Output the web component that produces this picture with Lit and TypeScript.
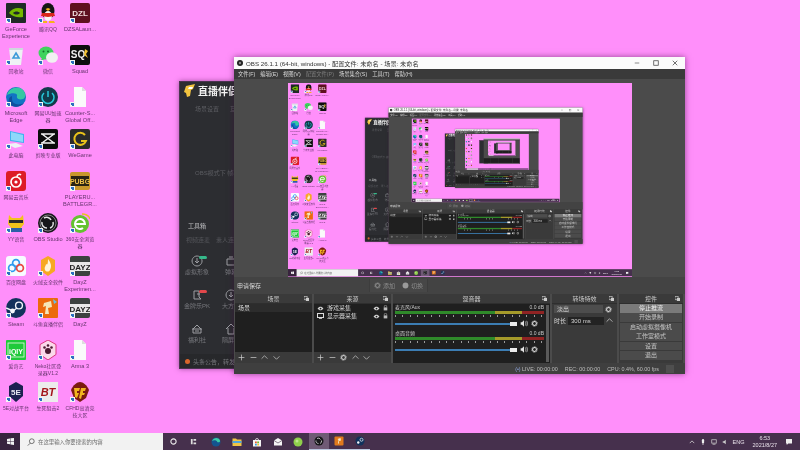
import { LitElement, html, css, svg, TemplateResult } from "lit";
import { customElement, property } from "lit/decorators.js";

const MIRROR_SCALE = 0.43;
const MAX_DEPTH = 4;
// below this nesting level text would be under a pixel, so windows are drawn as plain blocks
const TEXT_DEPTH = 3;

// all desktop icons share a 20x20 box
const ic = (body: unknown) => html`<svg class="ico" viewBox="0 0 20 20">${body}</svg>`;

const doc = svg`<path d="M4 0h8l4 4v16H4z" fill="#fafafa"/><path d="M12 0l4 4h-4z" fill="#ddd"/>`;
const dayz = svg`<rect width="20" height="20" rx="2" fill="#3c4240"/><rect y="6" width="20" height="9" fill="#e8e8e8"/><text x="10" y="13.5" font-size="8" font-weight="700" text-anchor="middle" fill="#222" font-family="Liberation Sans">DAYZ</text>`;

const ICONS: Record<string, TemplateResult> = {
  geforce: ic(svg`<rect width="20" height="20" rx="1" fill="#1f2a26"/><path d="M3 10c3-5 9-6 14-4v8c-5 1-10 0-14-4z" fill="#76b900"/><path d="M7 10c2-2 5-2 7 0-2 2-5 2-7 0z" fill="#1f2a26"/>`),
  qq: ic(svg`<ellipse cx="10" cy="8" rx="6.500" ry="8" fill="#151515"/><ellipse cx="10" cy="13" rx="4" ry="5" fill="#f5f5f5"/><path d="M4 10h12l1 3-7 1-7-1z" fill="#d8261c"/><path d="M7.500 6l2.500-1 2.500 1-2.500 2z" fill="#f5b21a"/><path d="M4 18h5v2H3zM11 18h5l1 2h-6z" fill="#f5b21a"/>`),
  dzsa: ic(svg`<rect width="20" height="20" rx="2" fill="#5e1020"/><text x="10" y="13" font-size="8" font-weight="700" text-anchor="middle" fill="#f0dcdc" font-family="Liberation Sans">DZL</text>`),
  bin: ic(svg`<path d="M3 3h14l-2 17H5z" fill="#eef2f5"/><path d="M3 3h14v2H3z" fill="#cfd8de"/><path d="M10 8l3 5H7z" fill="none" stroke="#3d9ad9" stroke-width="1.600"/>`),
  wechat: ic(svg`<ellipse cx="8" cy="8" rx="7.500" ry="6.500" fill="#3fd35d"/><path d="M4 12l-1 4 4-2z" fill="#3fd35d"/><ellipse cx="14" cy="12.500" rx="6" ry="5.200" fill="#f1f1f1"/><circle cx="5.500" cy="6.500" r="1" fill="#16702b"/><circle cx="10" cy="6.500" r="1" fill="#16702b"/>`),
  squad: ic(svg`<rect width="20" height="20" rx="2" fill="#0d0d0d"/><text x="8" y="13" font-size="10" font-weight="700" text-anchor="middle" fill="#eee" font-family="Liberation Sans">SQ</text><path d="M15 4l3 2-2 3 2 4-4-3z" fill="#f1c232"/>`),
  edge: ic(svg`<circle cx="10" cy="10" r="10" fill="#1273c4"/><path d="M1 8C3 1 12-2 17 3c3 3 3 8 0 9-3 1-7 0-6-3 1-3-5-4-10-1z" fill="#35c7a3"/><path d="M6 12c0 5 6 7 12 4-4 5-12 5-15 0-1-3 0-6 3-7z" fill="#0f4f9e"/>`),
  uu: ic(svg`<circle cx="10" cy="10" r="10" fill="#123a4a"/><path d="M6 6a6 6 0 1 0 8 0" fill="none" stroke="#27c6d9" stroke-width="1.500"/><path d="M10 4v6" stroke="#27c6d9" stroke-width="1.500"/>`),
  file: ic(doc),
  pc: ic(svg`<path d="M4 2l14 3v9L4 12z" fill="#3fb1ee"/><path d="M5 3l12 3v7L5 11z" fill="#8ed8fa"/><path d="M1 15l9-1 7 3-8 2z" fill="#eef2f6"/>`),
  capcut: ic(svg`<rect width="20" height="20" rx="2" fill="#0c0c0c"/><path d="M4 5l12 9M16 5L4 14M3 5h14M3 14h14" stroke="#f2f2f2" stroke-width="1.500" fill="none"/>`),
  wegame: ic(svg`<rect width="20" height="20" rx="2" fill="#2b2b2b"/><path d="M15 6a6 6 0 1 0 1 6h-5" fill="none" stroke="#e9c21b" stroke-width="2"/>`),
  music: ic(svg`<rect width="20" height="20" rx="3" fill="#dd1c27"/><circle cx="10" cy="11" r="5" fill="none" stroke="#fff" stroke-width="1.700"/><circle cx="10" cy="11" r="1.600" fill="#fff"/><path d="M11 6c0-3 3-3 4-2" fill="none" stroke="#fff" stroke-width="1.500"/>`),
  pubg: ic(svg`<rect y="1" width="20" height="18" rx="2" fill="#c8972c"/><rect x="1" y="5" width="18" height="10" fill="#2a2413"/><text x="10" y="13" font-size="7" font-weight="700" text-anchor="middle" fill="#f0c14b" font-family="Liberation Sans">PUBG</text>`),
  yy: ic(svg`<path d="M3 2l3 3h8l3-3 1 9-4 5H6L2 11z" fill="#f2c21c"/><rect x="3" y="7" width="14" height="3" fill="#2a2a2a"/><path d="M4 15h12v4H4z" fill="#2c5fa8"/>`),
  obs: ic(svg`<circle cx="10" cy="10" r="10" fill="#17171a"/><circle cx="10" cy="10" r="8" fill="none" stroke="#c8c8c8" stroke-width=".6"/><path d="M6 5a5 5 0 0 1 7 2M15 9a5 5 0 0 1-3 6M9 15a5 5 0 0 1-5-6" fill="none" stroke="#e6e6e6" stroke-width="1.500"/>`),
  b360: ic(svg`<circle cx="10" cy="11" r="9" fill="#64c22f"/><path d="M5 11h10a5 5 0 1 0-2 4" fill="none" stroke="#fff" stroke-width="2"/><path d="M12 1c4 0 7 2 8 5" fill="none" stroke="#e9c21b" stroke-width="1.300"/>`),
  baidu: ic(svg`<rect width="20" height="20" rx="3" fill="#f7fbff"/><circle cx="10" cy="7" r="3.400" fill="none" stroke="#2f9bf0" stroke-width="1.700"/><circle cx="6" cy="12" r="3.400" fill="none" stroke="#2f9bf0" stroke-width="1.700"/><circle cx="14" cy="12" r="3.400" fill="none" stroke="#e8483f" stroke-width="1.700"/>`),
  huorong: ic(svg`<path d="M3 4l7-4 7 4v11l-7 5-7-5z" fill="#f7a823"/><path d="M10 3c3 4 4 7 2 11-1 2-4 2-5 0-1-3 1-4 1-6 1 1 2 1 2-5z" fill="#fff4d8"/>`),
  dayz: ic(dayz),
  steam: ic(svg`<circle cx="10" cy="10" r="10" fill="#12325c"/><circle cx="13" cy="7.500" r="3.400" fill="none" stroke="#f2f6fa" stroke-width="1.400"/><circle cx="6.500" cy="13" r="2.400" fill="#f2f6fa"/><path d="M0 10l7 3 4-3" stroke="#f2f6fa" stroke-width="1.400" fill="none"/>`),
  douyu: ic(svg`<rect width="20" height="20" rx="1" fill="#ec6a0c"/><path d="M6 5l7-2 1 6-4 1 1 6H7l1-8-3 1z" fill="#f5e6b8"/><path d="M15 1l4 3-3 2z" fill="#67bde8"/>`),
  iqiyi: ic(svg`<rect width="20" height="20" rx="1" fill="#1fca3a"/><rect x="2" y="3" width="16" height="14" fill="none" stroke="#eafbe9" stroke-width=".8"/><text x="10" y="13.500" font-size="7" font-weight="700" text-anchor="middle" fill="#fff" font-family="Liberation Sans">iQIY</text>`),
  neko: ic(svg`<path d="M10 0l8 4.500v10L10 20l-8-5.500v-10z" fill="#fbd8ea" stroke="#d9367f"/><circle cx="10" cy="11" r="3" fill="#4a1a30"/><circle cx="6.500" cy="7.500" r="1.300" fill="#4a1a30"/><circle cx="13.500" cy="7.500" r="1.300" fill="#4a1a30"/><circle cx="10" cy="5.500" r="1.300" fill="#4a1a30"/>`),
  fivee: ic(svg`<path d="M3 4l7-4 7 4v10l-7 6-7-6z" fill="#1d2050"/><text x="10" y="13" font-size="8" font-weight="700" text-anchor="middle" fill="#e8e8f2" font-family="Liberation Sans">5E</text>`),
  bt: ic(svg`<rect width="20" height="20" fill="#ececec"/><text x="10" y="14" font-size="11" font-style="italic" font-weight="700" text-anchor="middle" fill="#a3161b" font-family="Liberation Sans">BT</text>`),
  cf: ic(svg`<path d="M1 8c2-5 6-8 9-8s7 3 9 8l-3 8-6 4-6-4z" fill="#7c1a10"/><path d="M4 6h6l-1 3H7v2h2l-2 5-2-1zM11 6h5l-1 3h-2v2h2l-1 2h-2l-1 4-2-1z" fill="#f1b51f"/>`),
};

type Shortcut = { icon?: string; label?: string };

const SHORTCUTS: Shortcut[] = [
  { icon: "geforce", label: "GeForce Experience" }, { icon: "qq", label: "腾讯QQ" }, { icon: "dzsa", label: "DZSALaun..." },
  { icon: "bin", label: "回收站" }, { icon: "wechat", label: "微信" }, { icon: "squad", label: "Squad" },
  { icon: "edge", label: "Microsoft Edge" }, { icon: "uu", label: "网易UU加速器" }, { icon: "file", label: "Counter-S... Global Off..." },
  { icon: "pc", label: "此电脑" }, { icon: "capcut", label: "剪映专业版" }, { icon: "wegame", label: "WeGame" },
  { icon: "music", label: "网易云音乐" }, {}, { icon: "pubg", label: "PLAYERU... BATTLEGR..." },
  { icon: "yy", label: "YY语音" }, { icon: "obs", label: "OBS Studio" }, { icon: "b360", label: "360安全浏览器" },
  { icon: "baidu", label: "百度网盘" }, { icon: "huorong", label: "火绒安全软件" }, { icon: "dayz", label: "DayZ Experimen..." },
  { icon: "steam", label: "Steam" }, { icon: "douyu", label: "斗鱼直播伴侣" }, { icon: "dayz", label: "DayZ" },
  { icon: "iqiyi", label: "爱奇艺" }, { icon: "neko", label: "Neko社区登录器V1.2" }, { icon: "file", label: "Arma 3" },
  { icon: "fivee", label: "5E对战平台" }, { icon: "bt", label: "生死狙击2" }, { icon: "cf", label: "CFHD高清竞技大区" },
];

const TASK_ICONS: { body: unknown; cls?: string }[] = [
  { body: svg`<circle cx="10" cy="10" r="9" fill="#14548f"/><path d="M2 8c3-7 13-8 16-1 1 4-5 5-6 2 0-2-6-4-10-1z" fill="#3bcba6"/>` },
  { body: svg`<path d="M1 3h7l2 2h9v13H1z" fill="#f0c445"/><path d="M1 8h18v4H1z" fill="#4fa6dd"/>` },
  { body: svg`<path d="M2 6h16v13H2z" fill="#f4f4f4"/><path d="M7 6a3 3 0 0 1 6 0" fill="none" stroke="#f4f4f4" stroke-width="1.500"/><rect x="6" y="9" width="3.500" height="3.500" fill="#e8542f"/><rect x="10.500" y="9" width="3.500" height="3.500" fill="#6fb82a"/><rect x="6" y="13.500" width="3.500" height="3.500" fill="#2c9be0"/><rect x="10.500" y="13.500" width="3.500" height="3.500" fill="#f3c02c"/>` },
  { body: svg`<path d="M2 7l8-5 8 5v10H2z" fill="#f5f5f5"/><path d="M2 7l8 5 8-5" fill="none" stroke="#3a2a40" stroke-width="1.200"/>` },
  { body: svg`<circle cx="10" cy="10" r="9" fill="#8fcf4b"/><circle cx="8" cy="8" r="3" fill="#bfe58c"/>` },
  { body: svg`<circle cx="10" cy="10" r="9" fill="#17171a"/><path d="M6 5a5 5 0 0 1 7 2M15 9a5 5 0 0 1-3 6M9 15a5 5 0 0 1-5-6" fill="none" stroke="#ddd" stroke-width="1.600"/>`, cls: "active" },
  { body: svg`<rect x="1" y="1" width="18" height="18" rx="2" fill="#e07a1d"/><path d="M7 6l6-2 1 5-4 1v5H8l1-7z" fill="#f6ebc8"/>`, cls: "open" },
  { body: svg`<circle cx="10" cy="10" r="9" fill="#12325c"/><circle cx="13" cy="7.500" r="3" fill="none" stroke="#f2f6fa" stroke-width="1.400"/><circle cx="6.500" cy="13" r="2.400" fill="#f2f6fa"/>`, cls: "open" },
];

const gear = (cls = "tool") => html`<svg class=${cls} viewBox="0 0 12 12"><circle cx="6" cy="6" r="3.300" fill="none" stroke="currentColor" stroke-width="1.800"/><circle cx="6" cy="6" r="5" fill="none" stroke="currentColor" stroke-width="1.200" stroke-dasharray="1.600 1.500"/></svg>`;
const plus = html`<svg class="tool" viewBox="0 0 12 12"><path d="M6 1v10M1 6h10" stroke="currentColor" stroke-width="1.200"/></svg>`;
const minus = html`<svg class="tool" viewBox="0 0 12 12"><path d="M1 6h10" stroke="currentColor" stroke-width="1.200"/></svg>`;
const up = html`<svg class="tool" viewBox="0 0 12 12"><path d="M1 8l5-5 5 5" fill="none" stroke="currentColor" stroke-width="1.200"/></svg>`;
const down = html`<svg class="tool" viewBox="0 0 12 12"><path d="M1 4l5 5 5-5" fill="none" stroke="currentColor" stroke-width="1.200"/></svg>`;
const eye = html`<svg class="mini" viewBox="0 0 12 8"><path d="M1 4c3-4 7-4 10 0-3 4-7 4-10 0z" fill="#d8d8d8"/><circle cx="6" cy="4" r="1.500" fill="#1e1e1e"/></svg>`;
const lock = html`<svg class="mini lock" viewBox="0 0 8 10"><rect x="1" y="4" width="6" height="5" fill="#bbb"/><path d="M2 4V2.500a2 2 0 0 1 4 0V4" fill="none" stroke="#bbb"/></svg>`;
const speaker = html`<svg class="vol" viewBox="0 0 12 10"><path d="M1 3h2l3-3v10L3 7H1z" fill="#e6e6e6"/><path d="M8 2c1 2 1 4 0 6M10 1c1.500 2.500 1.500 5.500 0 8" fill="none" stroke="#e6e6e6"/></svg>`;
const dockArrow = html`<svg class="dock-ic" viewBox="0 0 8 8"><rect x="0" y="1" width="5" height="5" fill="none" stroke="#ccc"/><rect x="3" y="3" width="5" height="5" fill="#ccc"/></svg>`;

@customElement("mirror-desktop")
export class MirrorDesktop extends LitElement {
  @property({ type: Number }) depth = 0;

  static styles = css`
    :host {
      display: block;
      width: 800px;
      height: 450px;
      font-family: "Liberation Sans", "Noto Sans CJK SC", sans-serif;
    }
    .screen {
      position: relative;
      width: 800px;
      height: 450px;
      overflow: hidden;
      background: #ff8ffa;
      display: flex;
      flex-direction: column;
    }
    .icons {
      flex: 1;
      display: grid;
      grid-template-columns: repeat(3, 32px);
      grid-auto-rows: 42.100px;
      padding-top: 3px;
      align-content: start;
    }
    .shortcut {
      display: flex;
      flex-direction: column;
      align-items: center;
      font-size: 5.600px;
      line-height: 7px;
      color: #66356d;
      text-align: center;
    }
    .shortcut .cjk {
      font-size: 5px;
      max-width: 31px;
    }
    .icon-box {
      position: relative;
      width: 20px;
      height: 20px;
      margin-bottom: 3px;
    }
    .ico {
      display: block;
      width: 20px;
      height: 20px;
    }
    .arrow {
      position: absolute;
      left: 0;
      bottom: 0;
      width: 5px;
      height: 5px;
      background: #f4f4f4;
    }
    .arrow::after {
      content: "";
      position: absolute;
      left: 1px;
      top: 1px;
      width: 3px;
      height: 3px;
      background: linear-gradient(45deg, transparent 30%, #2a6fc0 30%);
    }

    .taskbar {
      height: 17px;
      background: #46304d;
      display: flex;
      align-items: center;
      color: #e8e0ea;
    }
    .start {
      width: 20px;
      height: 17px;
      background: #38243e;
      display: flex;
      align-items: center;
      justify-content: center;
    }
    .start svg { width: 7px; height: 7px; }
    .search {
      width: 143px;
      height: 17px;
      box-sizing: border-box;
      background: #f2f2f2;
      color: #6b6b6b;
      font-size: 5.400px;
      display: flex;
      align-items: center;
      gap: 3px;
      padding-left: 7px;
    }
    .search svg { width: 8px; height: 8px; }
    .sys {
      width: 20px;
      display: flex;
      justify-content: center;
    }
    .sys svg { width: 7px; height: 7px; }
    .task-icons {
      display: flex;
      margin-left: 3px;
    }
    .task {
      width: 20.500px;
      height: 17px;
      box-sizing: border-box;
      display: flex;
      align-items: center;
      justify-content: center;
    }
    .task svg { width: 10px; height: 10px; }
    .task.active {
      background: #6f5a75;
      border-bottom: 1px solid #b9c6dd;
    }
    .task.open { border-bottom: 1px solid #b9c6dd; }
    .tray {
      margin-left: auto;
      display: flex;
      align-items: center;
      gap: 5px;
      padding-right: 8px;
      font-size: 5.500px;
    }
    .tray svg { width: 6px; height: 6px; }
    .clock {
      text-align: center;
      line-height: 7px;
      margin: 0 4px 0 3px;
    }

    /* the streaming app behind OBS */
    .helper {
      position: absolute;
      left: 179px;
      top: 81px;
      width: 110px;
      height: 288px;
      box-sizing: border-box;
      background: #2c2d31;
      border: 1px solid #4a3450;
      box-shadow: 0 0 5px rgba(70, 20, 70, 0.5);
      color: #77787d;
      font-size: 6px;
      display: flex;
      flex-direction: column;
    }
    .brand {
      display: flex;
      align-items: center;
      gap: 2px;
      padding: 1px 0 0 4px;
      height: 16px;
      color: #f4f4f4;
      font-size: 10px;
      font-weight: 700;
      white-space: nowrap;
    }
    .brand svg { width: 12px; height: 13px; }
    .tabs {
      display: flex;
      gap: 11px;
      padding: 5px 0 0 15px;
      height: 12px;
      color: #5d5e63;
    }
    .hint {
      margin-top: 52px;
      padding-left: 15px;
      height: 8px;
      color: #5d5e63;
      white-space: nowrap;
    }
    .tools-head {
      margin-top: 45px;
      padding-left: 8px;
      height: 12px;
      color: #c2c2c5;
    }
    .dim-row {
      display: flex;
      gap: 6px;
      margin-top: 3px;
      padding-left: 6px;
      height: 10px;
      color: #55565b;
      white-space: nowrap;
    }
    .tool-grid {
      display: grid;
      grid-template-columns: 34px 34px;
      grid-auto-rows: 34px;
      margin-top: 7px;
    }
    .tool-cell {
      position: relative;
      display: flex;
      flex-direction: column;
      align-items: center;
      gap: 2px;
      padding-top: 3px;
      line-height: 6px;
      white-space: nowrap;
    }
    .tool-cell svg { width: 12px; height: 12px; }
    .badge {
      position: absolute;
      left: 19px;
      top: 4px;
      width: 8px;
      height: 3px;
      border-radius: 2px;
      background: #35b98a;
    }
    .badge.hot { background: #e2474b; }
    .notice {
      margin-top: auto;
      height: 14px;
      display: flex;
      align-items: center;
      gap: 3px;
      padding-left: 5px;
      background: #27282b;
      white-space: nowrap;
      overflow: hidden;
    }
    .notice i {
      width: 5px;
      height: 5px;
      border-radius: 50%;
      background: #d9662c;
      flex: none;
    }

    /* OBS window */
    .obs {
      position: absolute;
      left: 234px;
      top: 57px;
      width: 451px;
      height: 317px;
      background: #4b4b4b;
      box-shadow: 0 0 6px rgba(60, 10, 60, 0.55);
      display: flex;
      flex-direction: column;
      color: #d8d8d8;
      font-size: 6px;
    }
    .title {
      height: 12px;
      background: #fbfbfb;
      color: #333;
      font-size: 6.200px;
      display: flex;
      align-items: center;
      gap: 2px;
      padding-left: 3px;
      white-space: nowrap;
    }
    .title .logo { width: 6px; height: 6px; margin-right: 1px; }
    .win-btns {
      margin-left: auto;
      display: flex;
      gap: 13px;
      padding-right: 7px;
    }
    .win-btns svg { width: 6px; height: 6px; display: block; }
    .menu {
      height: 10px;
      background: #3a3a3a;
      display: flex;
      align-items: center;
      gap: 5px;
      padding-left: 4px;
      font-size: 5.300px;
      white-space: nowrap;
    }
    .menu .off { color: #7e7e7e; }
    .stage {
      height: 198px;
      padding: 4px 0 0 54px;
      box-sizing: border-box;
    }
    .preview {
      position: relative;
      width: 344px;
      height: 194px;
      overflow: hidden;
      background: #ff8ffa;
    }
    .preview mirror-desktop {
      transform: scale(${MIRROR_SCALE});
      transform-origin: 0 0;
    }
    .scene-bar {
      height: 17px;
      display: flex;
      align-items: center;
      padding-left: 3px;
      background: #434343;
    }
    .studio {
      margin-left: 108px;
      display: flex;
      align-items: center;
      gap: 7px;
      padding: 0 4px;
      height: 13px;
      background: #474747;
      border-left: 1px solid #3d3d3d;
      border-right: 1px solid #3d3d3d;
      color: #8d8d8d;
    }
    .studio span {
      display: flex;
      align-items: center;
      gap: 2px;
    }
    .docks {
      height: 69px;
      display: flex;
      gap: 2px;
      padding-left: 1px;
    }
    .dock {
      display: flex;
      flex-direction: column;
      width: 77px;
    }
    .dock.mixer { width: 157px; }
    .dock.fade { width: 65px; background: #3a3a3a; }
    .dock.controls { width: 64px; background: #3a3a3a; }
    .dock-title {
      position: relative;
      height: 10px;
      line-height: 10px;
      background: #3a3a3a;
      border-bottom: 1px solid #2e2e2e;
      box-sizing: border-box;
      text-align: center;
      color: #c8c8c8;
    }
    .dock-ic {
      position: absolute;
      right: 3px;
      top: 2px;
      width: 5px;
      height: 5px;
    }
    .list {
      flex: 1;
      background: #1f1f1f;
    }
    .row {
      height: 8px;
      line-height: 8px;
      display: flex;
      align-items: center;
      gap: 3px;
      padding: 0 3px;
    }
    .row.sel { background: #2c2c2c; }
    .row .grow { flex: 1; }
    .mini { width: 7px; height: 5px; }
    .mini.lock { width: 5px; height: 6px; }
    .screen-ic { width: 7px; height: 6px; }
    .toolbar {
      height: 11px;
      background: #3a3a3a;
      display: flex;
      align-items: center;
      gap: 4.500px;
      padding-left: 3px;
      color: #d0d0d0;
    }
    .tool { width: 7px; height: 7px; }
    .mix-list {
      position: relative;
      flex: 1;
      background: #1f1f1f;
      padding: 0 6px 0 2px;
      font-size: 5px;
      color: #c8c8c8;
    }
    .channel { height: 26px; }
    .chan-head {
      display: flex;
      justify-content: space-between;
      height: 6px;
      line-height: 6px;
    }
    .meter {
      display: flex;
      height: 3px;
      margin-top: 1px;
    }
    .meter b { display: block; }
    .g { width: 67%; background: #2f8a2a; }
    .y { width: 18%; background: #a59a2a; }
    .r { width: 15%; background: #8f2323; }
    .ticks {
      height: 2px;
      margin-top: 1px;
      background: repeating-linear-gradient(90deg, #9a9a9a 0 1px, transparent 1px 7.300px);
    }
    .fader {
      display: flex;
      align-items: center;
      gap: 3px;
      margin-top: 3px;
      height: 7px;
    }
    .track {
      position: relative;
      width: 122px;
      height: 2px;
      background: #3c7db3;
    }
    .thumb {
      position: absolute;
      right: 0;
      top: -1px;
      width: 7px;
      height: 4px;
      background: #ececec;
    }
    .vol { width: 8px; height: 7px; }
    .fader .tool { color: #e0e0e0; }
    .scroll {
      position: absolute;
      right: 1px;
      top: 1px;
      bottom: 1px;
      width: 3px;
      background: #5a5a5a;
    }
    .fade-body {
      display: flex;
      flex-direction: column;
      gap: 3px;
      padding: 1px 2px;
    }
    .fade-row {
      display: flex;
      align-items: center;
      gap: 2px;
      white-space: nowrap;
    }
    .fade-row .tool { color: #dcdcdc; flex: none; }
    .combo {
      width: 49px;
      height: 8px;
      line-height: 8px;
      padding-left: 3px;
      box-sizing: border-box;
      background: #4d4d4d;
      flex: none;
    }
    .spin {
      width: 36px;
      height: 8px;
      line-height: 8px;
      padding-left: 3px;
      box-sizing: border-box;
      background: #232323;
      flex: none;
    }
    .ctrl-list {
      display: flex;
      flex-direction: column;
      gap: 0.500px;
      padding: 0 1px;
    }
    .ctrl {
      height: 8.900px;
      line-height: 8.900px;
      text-align: center;
      background: #4b4b4b;
      color: #c6c6c6;
    }
    .ctrl.on { background: #7a7a7a; color: #ededed; }
    .status {
      height: 11px;
      display: flex;
      align-items: center;
      justify-content: flex-end;
      gap: 7px;
      padding-right: 11px;
      background: #3f3f3f;
      font-size: 5.400px;
      color: #bdbdbd;
      white-space: nowrap;
    }
    .status .rate { width: 8px; height: 8px; background: #4f4f4f; }
    .status .dot { color: #8fa6e0; }
    .far-docks {
      flex: 1;
      margin-top: 27px;
      margin-bottom: 11px;
      display: flex;
      gap: 2px;
    }
    .far-docks .list:nth-child(3) { flex: 2; }
  `;

  private helperWindow() {
    if (this.depth >= TEXT_DEPTH) return html`<div class="helper"></div>`;
    const cells: { label: string; badge?: string; d: string }[] = [
      { label: "虚拟形象", badge: "new", d: "M6 1a5 5 0 1 0 .1 0M6 3v4M4 6l2 2 2-2" },
      { label: "弹幕", d: "M2 4h8v6H2zM4 2h4" },
      { label: "金牌乐PK", badge: "hot", d: "M3 2h5v6l2 2H3zM6 5h3" },
      { label: "大方向", d: "M6 1a5 5 0 1 0 .1 0M6 3v4M4 6l2 2 2-2" },
      { label: "福利社", d: "M2 6l4-4 4 4v4H2zM1 6h10M4 8h4" },
      { label: "隔屏计", d: "M1 6l5-5 5 5M3 5v6h6V5" },
    ];
    return html`<div class="helper">
      <div class="brand">
        <svg viewBox="0 0 12 13"><path d="M2 2l9-2-2 5-2 1-1 6-3 1-1-4-2-1z" fill="#f3c43f"/><path d="M5 3h4l-1 2H4z" fill="#fff"/></svg>
        直播伴侣
      </div>
      <div class="tabs"><span>场景设置</span><span>互动</span></div>
      <div class="hint">OBS模式下 帧率</div>
      <div class="tools-head">工具箱</div>
      <div class="dim-row"><span>视频连麦</span><span>素人连线</span></div>
      <div class="tool-grid">
        ${cells.map(
          (c) => html`<div class="tool-cell">
            <svg viewBox="0 0 12 12"><path d=${c.d} fill="none" stroke="#9d9ea3"/></svg>
            ${c.badge ? html`<i class="badge ${c.badge === "hot" ? "hot" : ""}"></i>` : ""}
            <span>${c.label}</span>
          </div>`
        )}
      </div>
      <div class="notice"><i></i>头条公告，转发无门槛</div>
    </div>`;
  }

  private mirror() {
    return html`<div class="stage">
      <div class="preview">
        ${this.depth < MAX_DEPTH
          ? html`<mirror-desktop .depth=${this.depth + 1}></mirror-desktop>`
          : ""}
      </div>
    </div>`;
  }

  private obsWindow() {
    if (this.depth >= TEXT_DEPTH) {
      return html`<div class="obs">
        <div class="title"></div>
        <div class="menu"></div>
        ${this.mirror()}
        <div class="far-docks">
          <div class="list"></div><div class="list"></div><div class="list"></div><div class="list"></div>
        </div>
      </div>`;
    }
    const menus = ["文件(F)", "编辑(E)", "视图(V)", "配置文件(P)", "场景集合(S)", "工具(T)", "帮助(H)"];
    const controls = ["停止推流", "开始录制", "启动虚拟摄像机", "工作室模式", "设置", "退出"];
    const channels = [
      { name: "麦克风/Aux", db: "0.0 dB" },
      { name: "桌面音频", db: "0.0 dB" },
    ];
    return html`<div class="obs">
      <div class="title">
        <svg class="logo" viewBox="0 0 20 20"><circle cx="10" cy="10" r="10" fill="#222"/><circle cx="10" cy="10" r="4" fill="#888"/></svg>
        OBS 26.1.1 (64-bit, windows) - 配置文件: 未命名 - 场景: 未命名
        <div class="win-btns">
          <svg viewBox="0 0 8 8"><path d="M1 4h6" stroke="#666"/></svg>
          <svg viewBox="0 0 8 8"><rect x="1" y="1" width="6" height="6" fill="none" stroke="#444"/></svg>
          <svg viewBox="0 0 8 8"><path d="M1 1l6 6M7 1L1 7" stroke="#444"/></svg>
        </div>
      </div>
      <div class="menu">
        ${menus.map((m, i) => html`<span class=${i === 3 ? "off" : ""}>${m}</span>`)}
      </div>
      ${this.mirror()}
      <div class="scene-bar">
        <span>申请保存</span>
        <div class="studio">
          <span>${gear()}添加</span>
          <span><svg class="tool" viewBox="0 0 12 12"><circle cx="6" cy="6" r="5" fill="#9a9a9a"/></svg>切换</span>
        </div>
      </div>
      <div class="docks">
        <div class="dock">
          <div class="dock-title">场景${dockArrow}</div>
          <div class="list"><div class="row sel">场景</div></div>
          <div class="toolbar">${plus}${minus}${up}${down}</div>
        </div>
        <div class="dock">
          <div class="dock-title">来源${dockArrow}</div>
          <div class="list">
            <div class="row">${eye}<span class="grow">游戏采集</span>${eye}${lock}</div>
            <div class="row">
              <svg class="screen-ic" viewBox="0 0 7 6"><rect x=".5" y=".5" width="6" height="4" fill="none" stroke="#ddd"/><path d="M2 5.700h3" stroke="#ddd"/></svg>
              <span class="grow">显示器采集</span>${eye}${lock}
            </div>
          </div>
          <div class="toolbar">${plus}${minus}${gear()}${up}${down}</div>
        </div>
        <div class="dock mixer">
          <div class="dock-title">混音器${dockArrow}</div>
          <div class="mix-list">
            ${channels.map(
              (c) => html`<div class="channel">
                <div class="chan-head"><span>${c.name}</span><span>${c.db}</span></div>
                <div class="meter"><b class="g"></b><b class="y"></b><b class="r"></b></div>
                <div class="ticks"></div>
                <div class="fader">
                  <div class="track"><div class="thumb"></div></div>
                  ${speaker}${gear()}
                </div>
              </div>`
            )}
            <div class="scroll"></div>
          </div>
        </div>
        <div class="dock fade">
          <div class="dock-title">转场特效${dockArrow}</div>
          <div class="fade-body">
            <div class="fade-row"><div class="combo">淡出</div>${gear()}</div>
            <div class="fade-row"><span>时长</span><div class="spin">300 ms</div>${up}</div>
          </div>
        </div>
        <div class="dock controls">
          <div class="dock-title">控件${dockArrow}</div>
          <div class="ctrl-list">
            ${controls.map((c, i) => html`<div class="ctrl ${i === 0 ? "on" : ""}">${c}</div>`)}
          </div>
        </div>
      </div>
      <div class="status">
        <span><span class="dot">(•)</span> LIVE: 00:00:00</span>
        <span>REC: 00:00:00</span>
        <span>CPU: 0.4%, 60.00 fps</span>
        <span class="rate"></span>
      </div>
    </div>`;
  }

  private shortcut(s: Shortcut) {
    if (!s.icon) return html`<div></div>`;
    const label = s.label ?? "";
    return html`<div class="shortcut">
      <div class="icon-box">${ICONS[s.icon]}<span class="arrow"></span></div>
      ${this.depth < TEXT_DEPTH
        ? html`<span class=${/[\u4e00-\u9fff]/.test(label) ? "cjk" : ""}>${label}</span>`
        : ""}
    </div>`;
  }

  private taskbar() {
    const legible = this.depth < TEXT_DEPTH;
    return html`<div class="taskbar">
      <div class="start">
        <svg viewBox="0 0 8 8"><path d="M0 1l3.500-.5v3H0zM4 .4L8 0v3.500H4zM0 4h3.500v3L0 6.500zM4 4h4v4l-4-.5z" fill="#f2f2f2"/></svg>
      </div>
      <div class="search">
        <svg viewBox="0 0 10 10"><circle cx="6" cy="4" r="3" fill="none" stroke="#555"/><path d="M4 6.500L1 9.500" stroke="#555"/></svg>
        ${legible ? "在这里输入你要搜索的内容" : ""}
      </div>
      <div class="sys"><svg viewBox="0 0 8 8"><circle cx="4" cy="4" r="3" fill="none" stroke="#eee" stroke-width="1.200"/></svg></div>
      <div class="sys"><svg viewBox="0 0 8 8"><path d="M1 1h2v6H1zM4 1h3v2H4zM4 5h3v2H4z" fill="#ddd"/></svg></div>
      <div class="task-icons">
        ${TASK_ICONS.map(
          (t) => html`<div class="task ${t.cls ?? ""}"><svg viewBox="0 0 20 20">${t.body}</svg></div>`
        )}
      </div>
      ${legible
        ? html`<div class="tray">
            <svg viewBox="0 0 8 8"><path d="M1 5.500L4 2.500l3 3" fill="none" stroke="#ddd"/></svg>
            <svg viewBox="0 0 8 8"><rect x="2.500" y="0" width="3" height="6" rx="1.500" fill="#eee"/><path d="M4 6v2" stroke="#eee"/></svg>
            <svg viewBox="0 0 8 8"><rect x="1" y="1" width="6" height="4.500" fill="none" stroke="#ccc"/><path d="M2 7h4" stroke="#ccc"/></svg>
            <svg viewBox="0 0 8 8"><path d="M1 3h1.500L5 1v6L2.500 5H1z" fill="#ccc"/></svg>
            <span>ENG</span>
            <div class="clock">6:53<br />2021/8/27</div>
            <svg viewBox="0 0 8 8"><path d="M0 0h8v6H3L1 8V6H0z" fill="#eee"/></svg>
          </div>`
        : ""}
    </div>`;
  }

  render() {
    return html`<div class="screen">
      <div class="icons">${SHORTCUTS.map((s) => this.shortcut(s))}</div>
      ${this.helperWindow()} ${this.obsWindow()} ${this.taskbar()}
    </div>`;
  }
}

@customElement("app-root")
export class AppRoot extends LitElement {
  static styles = css`
    :host {
      display: block;
      width: 800px;
      height: 450px;
      overflow: hidden;
    }
    /* the reference is a soft, rescaled capture */
    .capture {
      filter: blur(0.6px);
    }
  `;

  render() {
    return html`<div class="capture"><mirror-desktop></mirror-desktop></div>`;
  }
}
